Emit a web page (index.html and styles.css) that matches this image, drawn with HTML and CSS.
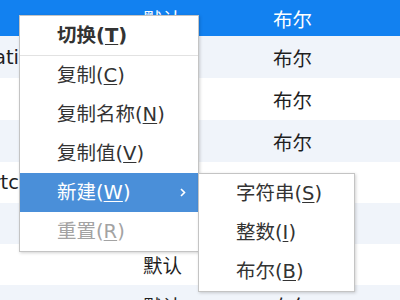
FILE: index.html
```html
<!DOCTYPE html>
<html lang="zh">
<head>
    <meta charset="UTF-8">
    <title>设置编辑器</title>
    <link rel="stylesheet" href="styles.css">
</head>
<body>

    <!-- Tabla de claves -->
    <div class="tabla">
        <div class="fila seleccionada">
            <div class="celda nombre"><span></span></div>
            <div class="celda">默认</div>
            <div class="celda">布尔</div>
        </div>
        <div class="fila">
            <div class="celda nombre"><span>Configurati</span></div>
            <div class="celda">默认</div>
            <div class="celda">布尔</div>
        </div>
        <div class="fila">
            <div class="celda nombre"><span></span></div>
            <div class="celda">默认</div>
            <div class="celda">布尔</div>
        </div>
        <div class="fila">
            <div class="celda nombre"><span></span></div>
            <div class="celda">默认</div>
            <div class="celda">布尔</div>
        </div>
        <div class="fila baja">
            <div class="celda nombre"><span>Shortc</span></div>
            <div class="celda">默认</div>
            <div class="celda">布尔</div>
        </div>
        <div class="fila baja">
            <div class="celda nombre"><span></span></div>
            <div class="celda">默认</div>
            <div class="celda">布尔</div>
        </div>
        <div class="fila baja">
            <div class="celda nombre"><span></span></div>
            <div class="celda">默认</div>
            <div class="celda">布尔</div>
        </div>
        <div class="fila baja">
            <div class="celda nombre"><span></span></div>
            <div class="celda">默认</div>
            <div class="celda">布尔</div>
        </div>
    </div>

    <!-- Menú contextual -->
    <div class="menu principal">
        <div class="item negrita">切换(<u>T</u>)</div>
        <div class="separador"></div>
        <div class="item">复制(<u>C</u>)</div>
        <div class="item">复制名称(<u>N</u>)</div>
        <div class="item">复制值(<u>V</u>)</div>
        <div class="item activo">新建(<u>W</u>)
            <svg class="flecha" width="6" height="9" viewBox="0 0 6 9"><polyline points="1,1 4.5,4.5 1,8" fill="none" stroke="#fff" stroke-width="1.6"/></svg>
        </div>
        <div class="item desactivado">重置(<u>R</u>)</div>
    </div>

    <!-- Submenú "nuevo" -->
    <div class="menu submenu">
        <div class="item">字符串(<u>S</u>)</div>
        <div class="item">整数(<u>I</u>)</div>
        <div class="item">布尔(<u>B</u>)</div>
    </div>

</body>
</html>
```

FILE: styles.css
```css
body {
    margin: 0;
    width: 400px;
    height: 300px;
    overflow: hidden;
    position: relative;
    background-color: #fff;
    font-family: "DejaVu Sans", "Noto Sans CJK SC", sans-serif;
    font-size: 19.5px;
    color: #1e1e1e;
}

/* Tabla */
.tabla {
    display: flex;
    flex-direction: column;
}

.fila {
    display: grid;
    grid-template-columns: 143px 130px 1fr;
    align-items: center;
    height: 42px;
}

.fila:nth-child(even) {
    background-color: #f0f4fa;
}

.fila.baja {
    height: 41px;
}

.fila.seleccionada {
    height: 36px;
    background-color: #1281f0;
    color: #fff;
}

.celda {
    white-space: nowrap;
}

.celda.nombre {
    width: 19px;
    overflow: hidden;
    display: flex;
    justify-content: flex-end;
}

/* Menús */
.menu {
    position: absolute;
    background-color: #fff;
    border: 1px solid #c4c4c4;
    box-shadow: 1px 1px 3px rgba(0, 0, 0, 0.18);
    color: #333;
}

.principal {
    left: 19px;
    top: 15px;
    width: 178px;
}

.submenu {
    left: 198px;
    top: 173px;
    width: 155px;
}

.item {
    height: 39px;
    line-height: 39px;
    padding-left: 37px;
    position: relative;
    white-space: nowrap;
}

.item u {
    text-decoration-thickness: 1px;
    text-underline-offset: 2px;
}

.negrita {
    font-weight: bold;
}

.separador {
    height: 1px;
    background-color: #e2e2e2;
}

.item.activo {
    background-color: #4a8fd9;
    color: #fff;
}

.item.desactivado {
    color: #a3a3a3;
}

.flecha {
    position: absolute;
    right: 12px;
    top: 15px;
}
```
